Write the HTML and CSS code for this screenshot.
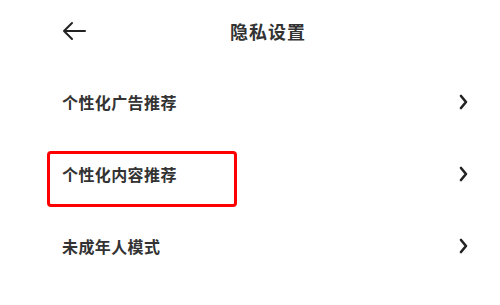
FILE: index.html
```html
<!DOCTYPE html>
<html lang="zh">
<head>
<meta charset="utf-8">
<link rel="stylesheet" href="styles.css">
</head>
<body>
<div class="page">
  <header class="header">
    <svg class="back" width="24" height="20" viewBox="0 0 24 20" fill="none" stroke="#222" stroke-width="2" stroke-linecap="round" stroke-linejoin="round">
      <path d="M23 10H2M10 2L2 10L10 18"/>
    </svg>
    <div class="title">隐私设置</div>
  </header>
  <div class="row"><span class="label">个性化广告推荐</span><svg class="chev" width="9" height="16" viewBox="0 0 9 16" fill="none" stroke="#222" stroke-width="2.6" stroke-linecap="round" stroke-linejoin="round"><path d="M2 2L7 8L2 14"/></svg></div>
  <div class="row highlighted"><span class="label">个性化内容推荐</span><svg class="chev" width="9" height="16" viewBox="0 0 9 16" fill="none" stroke="#222" stroke-width="2.6" stroke-linecap="round" stroke-linejoin="round"><path d="M2 2L7 8L2 14"/></svg><div class="mark"></div></div>
  <div class="row"><span class="label">未成年人模式</span><svg class="chev" width="9" height="16" viewBox="0 0 9 16" fill="none" stroke="#222" stroke-width="2.6" stroke-linecap="round" stroke-linejoin="round"><path d="M2 2L7 8L2 14"/></svg></div>
</div>
</body>
</html>
```
FILE: styles.css
```css
html, body {
  margin: 0;
  padding: 0;
  background: #fff;
}
.page {
  width: 500px;
  height: 305px;
  font-family: "Noto Sans CJK SC", "Noto Sans", sans-serif;
  color: #333;
}
.header {
  height: 62px;
  display: flex;
  align-items: center;
  padding-left: 62px;
}
.back {
  display: block;
}
.title {
  margin-left: 144px;
  font-size: 18px;
  font-weight: 700;
  color: #333;
  letter-spacing: 1px;
}
.row {
  position: relative;
  height: 72px;
  display: flex;
  align-items: center;
  justify-content: space-between;
  padding: 0 32px 0 62px;
}
.row:first-of-type {
  margin-top: 4px;
}
.label {
  font-size: 16px;
  font-weight: 700;
  color: #333;
  letter-spacing: 0.4px;
}
.chev {
  display: block;
}
.mark {
  position: absolute;
  left: 47px;
  top: 13px;
  width: 184px;
  height: 50px;
  border: 3px solid #f00;
  border-radius: 4px;
}
```
